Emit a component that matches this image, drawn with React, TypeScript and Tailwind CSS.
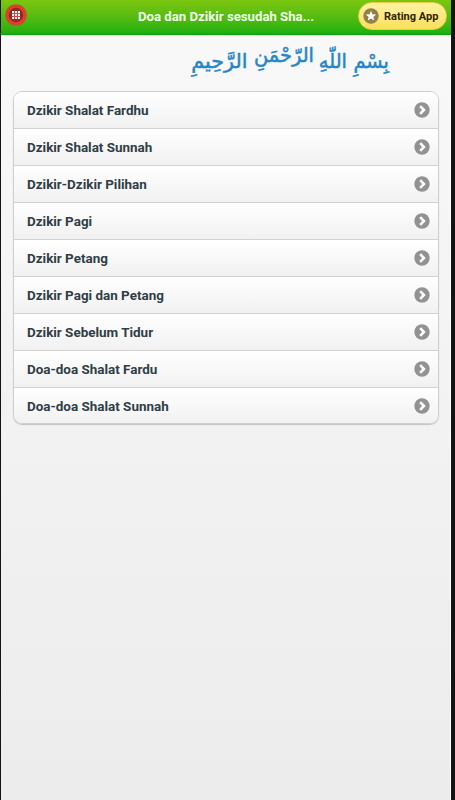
const items = [
  "Dzikir Shalat Fardhu",
  "Dzikir Shalat Sunnah",
  "Dzikir-Dzikir Pilihan",
  "Dzikir Pagi",
  "Dzikir Petang",
  "Dzikir Pagi dan Petang",
  "Dzikir Sebelum Tidur",
  "Doa-doa Shalat Fardu",
  "Doa-doa Shalat Sunnah",
];

function GridIcon() {
  return (
    <svg width="22" height="22" viewBox="0 0 22 22" className="shrink-0">
      <circle cx="11" cy="11" r="10.8" fill="#b5582a" />
      <circle cx="11" cy="11" r="9.8" fill="#e63a2c" />
      <circle cx="11" cy="11" r="7.2" fill="#8c2a24" />
      <rect x="7" y="7" width="8" height="8" fill="#c94d4d" />
      {[7, 10, 13].map((y) =>
        [7, 10, 13].map((x) => (
          <rect key={`${x}-${y}`} x={x} y={y} width="2" height="2" fill="#fff4f0" />
        )),
      )}
    </svg>
  );
}

function StarIcon() {
  return (
    <svg width="16" height="16" viewBox="0 0 16 16" className="shrink-0">
      <circle cx="8" cy="8" r="7.7" fill="#91804a" />
      <path d="M8 2.8 9.4 6.3 13.2 6.5 10.3 8.9 11.2 12.6 8 10.6 4.8 12.6 5.7 8.9 2.8 6.5 6.6 6.3Z" fill="#fff" />
    </svg>
  );
}

function ArrowIcon() {
  return (
    <svg width="16" height="16" viewBox="0 0 16 16" className="shrink-0">
      <circle cx="8" cy="8" r="7.7" fill="#929292" />
      <path d="M6.2 4.2 9.9 8 6.2 11.8" fill="none" stroke="#fff" strokeWidth="2.6" />
    </svg>
  );
}

export default function App() {
  return (
    <div className="flex h-[800px] w-[455px] bg-[#141414] pl-px font-[Roboto,sans-serif]">
      <div className="flex w-[450px] flex-col border-r border-white bg-linear-to-b from-[#f9f9f9] to-[#ececec]">
        <header className="-mr-px flex h-[35px] shrink-0 items-start border-b border-[#159a13] bg-linear-to-b from-[#7bc610] to-[#12b010]">
          <div className="ml-1 mt-1">
            <GridIcon />
          </div>
          <h1 className="ml-[111px] mt-[7px] w-[220px] whitespace-nowrap text-[13.2px] leading-5 font-bold text-[#f0ffe8]">
            Doa dan Dzikir sesudah Sha...
          </h1>
          <button className="mt-[2px] flex h-7 w-[89px] shrink-0 items-center gap-[5px] rounded-full border border-[#f1cb4b] bg-linear-to-b from-[#fff2a2] to-[#fedf57] pl-[4px] text-[11px] font-bold whitespace-nowrap text-[#2b2508]">
            <StarIcon />
            <span className="pt-[2px]">Rating App</span>
          </button>
        </header>
        <div
          dir="rtl"
          lang="ar"
          className="flex h-[56px] shrink-0 items-start border-t border-[#d5f5bd] pt-[9px] pr-[61px] font-['DejaVu_Sans',sans-serif] text-[20px] leading-[32px] whitespace-nowrap text-[#2586c6] [-webkit-text-stroke:0.5px_#2586c6]"
        >
          <span className="w-[42px] origin-right scale-x-[0.97]">بِسْمِ</span>
          <span className="w-[33px] origin-right scale-x-[0.97]">اللّهِ</span>
          <span className="relative -top-[6px] w-[67px] origin-right scale-x-[0.97]">الرّحْمَنِ</span>
          <span className="origin-right scale-x-[1.03]">الرَّحِيمِ</span>
        </div>
        <ul className="mr-[11px] ml-[12px] flex h-[333px] flex-col overflow-hidden rounded-[9px] border border-[#cfcfcf] shadow-[0_1px_1px_rgba(0,0,0,0.2)]">
          {items.map((item) => (
            <li
              key={item}
              className="group flex h-[37px] shrink-0 items-center justify-between border-b border-[#d2d2d2] bg-linear-to-b from-white to-[#f1f1f1] pr-[8px] pl-[13px] text-[13.45px] font-bold text-[#2f3e46] last:h-[35px] last:border-b-0"
            >
              <span className="pt-[2px] group-last:pt-[3px]">{item}</span>
              <ArrowIcon />
            </li>
          ))}
        </ul>
      </div>
    </div>
  );
}
